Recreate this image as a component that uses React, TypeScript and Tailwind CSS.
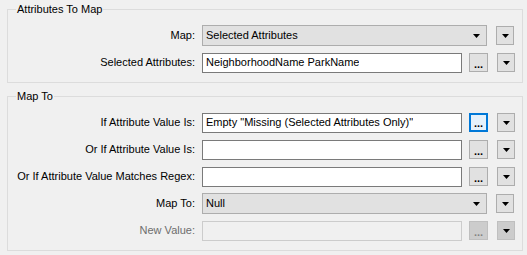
import type { ReactNode } from 'react'

const font = { fontFamily: '"Liberation Sans", Arial, sans-serif' }

function Arrow() {
  return (
    <svg width="7" height="4" viewBox="0 0 7 4" className="text-black">
      <polygon points="0,0 7,0 3.5,4" fill="currentColor" />
    </svg>
  )
}

function DropButton({ disabled = false }: { disabled?: boolean }) {
  return (
    <div
      className={`ml-[9px] flex h-[19px] w-[18px] items-center justify-center border ${
        disabled ? 'border-[#bfbfbf] bg-[#cccccc]' : 'border-[#adadad] bg-[#e1e1e1]'
      }`}
    >
      <Arrow />
    </div>
  )
}

function DotsButton({ focused = false, disabled = false }: { focused?: boolean; disabled?: boolean }) {
  const cls = disabled
    ? 'border border-[#bfbfbf] bg-[#cccccc] text-[#838383]'
    : focused
      ? 'border-2 border-[#0078d7] bg-[#e5f1fb] text-black'
      : 'border border-[#adadad] bg-[#e1e1e1] text-black'
  return (
    <div className={`ml-[7px] flex h-[19px] w-[19px] items-end justify-center pb-[1px] text-[11px] leading-[11px] font-bold ${cls}`}>
      ...
    </div>
  )
}

function TextField({ value = '', disabled = false }: { value?: string; disabled?: boolean }) {
  return (
    <div
      className={`flex h-[20px] w-[260px] items-center border px-[3px] ${
        disabled ? 'border-[#cccccc] bg-[#f0f0f0]' : 'border-[#7a7a7a] bg-white'
      }`}
    >
      <span className="truncate">{value}</span>
    </div>
  )
}

function Combo({ value }: { value: string }) {
  return (
    <div className="flex h-[21px] w-[285px] items-center justify-between border border-[#adadad] bg-[#e1e1e1] pr-[6px] pl-[3px]">
      <span>{value}</span>
      <Arrow />
    </div>
  )
}

function Row({ label, muted = false, children }: { label: string; muted?: boolean; children: ReactNode }) {
  return (
    <div className="flex h-[21px] items-center">
      <div className={`w-[188px] pr-[1px] text-right ${muted ? 'text-[#6d6d6d]' : 'text-black'}`}>{label}</div>
      <div className="ml-[6px] flex items-center">{children}</div>
    </div>
  )
}

function Group({ title, children }: { title: string; children: ReactNode }) {
  return (
    <fieldset className="border border-[#dcdcdc] pb-[9px]">
      <legend className="ml-[8px] px-[1px] leading-[13px]">{title}</legend>
      <div className="mt-[9px] flex flex-col gap-[6px]">{children}</div>
    </fieldset>
  )
}

export default function App() {
  return (
    <div className="h-[255px] w-[527px] bg-[#f0f0f0] pt-[3px] pr-[4px] pl-[7px] text-[11px] text-black" style={font}>
      <div className="flex flex-col gap-[7px]">
        <Group title="Attributes To Map">
          <Row label="Map:">
            <Combo value="Selected Attributes" />
            <DropButton />
          </Row>
          <Row label="Selected Attributes:">
            <TextField value="NeighborhoodName ParkName" />
            <DotsButton />
            <DropButton />
          </Row>
        </Group>
        <Group title="Map To">
          <Row label="If Attribute Value Is:">
            <TextField value={'Empty "Missing (Selected Attributes Only)"'} />
            <DotsButton focused />
            <DropButton />
          </Row>
          <Row label="Or If Attribute Value Is:">
            <TextField />
            <DotsButton />
            <DropButton />
          </Row>
          <Row label="Or If Attribute Value Matches Regex:">
            <TextField />
            <DotsButton />
            <DropButton />
          </Row>
          <Row label="Map To:">
            <Combo value="Null" />
            <DropButton />
          </Row>
          <Row label="New Value:" muted>
            <TextField disabled />
            <DotsButton disabled />
            <DropButton disabled />
          </Row>
        </Group>
      </div>
    </div>
  )
}
